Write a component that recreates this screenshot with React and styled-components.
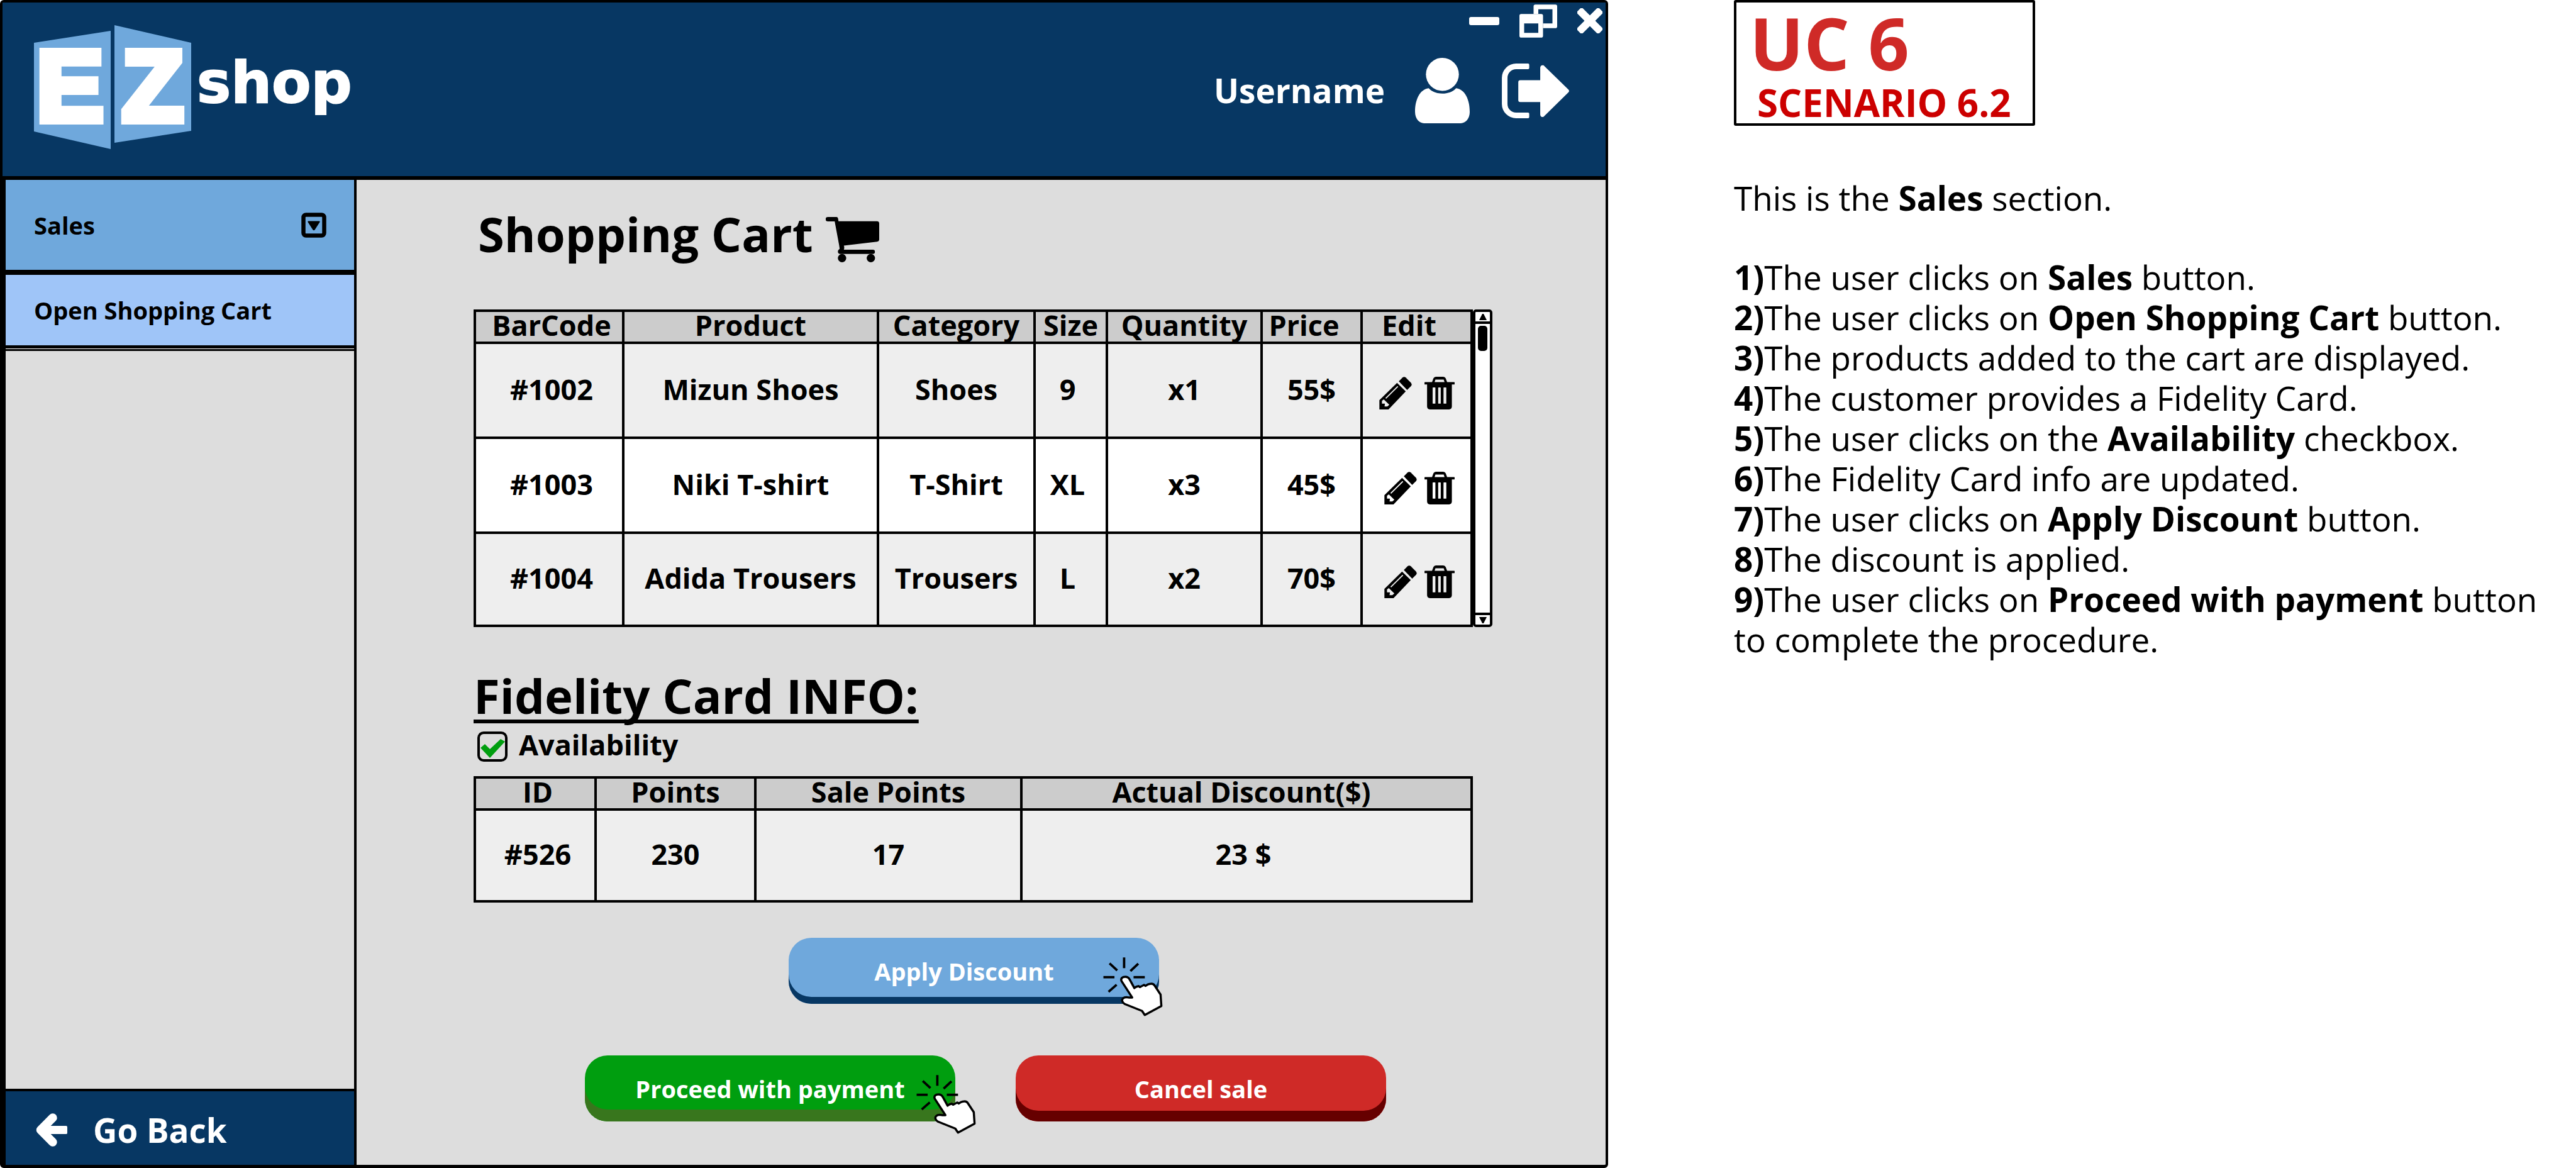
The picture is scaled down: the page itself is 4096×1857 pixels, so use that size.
import React from "react";
import styled, { createGlobalStyle } from "styled-components";

const color = {
  navy: "#073763",
  blue: "#6fa8dc",
  paleBlue: "#9fc5f8",
  green: "#009e0f",
  darkGreen: "#38761d",
  red: "#cf2a27",
  darkRed: "#660000",
  page: "#dddddd",
  head: "#cccccc",
  row: "#eeeeee",
};

const GlobalStyle = createGlobalStyle`
  *, *::before, *::after { box-sizing: border-box; }
  body {
    margin: 0;
    background: #fff;
    color: #000;
    font-family: "Open Sans", "Noto Sans", sans-serif;
  }
  h1, h2, p, ol { margin: 0; padding: 0; }
  button {
    margin: 0;
    padding: 0;
    border: 0;
    background: none;
    color: inherit;
    font: inherit;
    cursor: pointer;
  }
  svg { display: block; flex: none; }
`;

const Page = styled.div`
  display: grid;
  grid-template-columns: minmax(0, 1fr) 1539px;
  min-height: 100vh;
`;

/* ---------- application window ---------- */

const Window = styled.div`
  display: flex;
  flex-direction: column;
  border: 4px solid #000;
  border-bottom-width: 5px;
  border-radius: 6px;
  background: ${color.page};
`;

const Header = styled.header`
  display: flex;
  justify-content: space-between;
  height: 282px;
  padding-left: 50px;
  border-bottom: 6px solid #000;
  background: ${color.navy};
  color: #fff;
`;

const LogoLink = styled.a`
  padding-top: 35px;
`;

const HeaderSide = styled.div`
  display: flex;
  flex-direction: column;
  align-items: flex-end;
  gap: 30px;
`;

const WindowControls = styled.div`
  display: flex;
  align-items: center;
  gap: 32px;
  height: 58px;
  padding-right: 5px;
`;

const UserBar = styled.div`
  display: flex;
  align-items: center;
  height: 104px;
  padding-right: 58px;
  font-size: 53px;
  font-weight: 700;
  line-height: 64px;
`;

const UserName = styled.span`
  margin-right: 48px;
`;

const LogoutButton = styled.button`
  margin-left: 51px;
`;

const Body = styled.div`
  display: grid;
  grid-template-columns: 563px minmax(0, 1fr);
  flex: 1;
`;

const Sidebar = styled.nav`
  display: flex;
  flex-direction: column;
  border-left: 5px solid #000;
  border-right: 4px solid #000;
`;

const MenuItem = styled.button`
  display: flex;
  align-items: center;
  justify-content: space-between;
  height: ${(p) => p.$height}px;
  padding: 0 44px 0 45px;
  background: ${(p) => p.$fill};
  border-bottom: ${(p) => p.$line}px solid #000;
  font-size: 38px;
  font-weight: 700;
  line-height: 52px;
  text-align: left;
`;

const MenuRest = styled.div`
  flex: 1;
  margin-top: 3px;
  border-top: 3px solid #000;
  box-shadow: 0 -1px 0 #fff, 0 -3px 0 #000;
`;

const BackButton = styled.button`
  display: flex;
  align-items: center;
  gap: 41px;
  height: 121px;
  padding: 6px 0 0 48px;
  border-top: 4px solid #000;
  background: ${color.navy};
  color: #fff;
  font-size: 53px;
  font-weight: 700;
  line-height: 64px;
`;

const Main = styled.main`
  display: flex;
  flex-direction: column;
  padding: 41px 180px 0 186px;
`;

const Title = styled.h1`
  display: flex;
  align-items: flex-end;
  gap: 20px;
  padding-left: 7px;
  font-size: 76px;
  font-weight: 700;
  line-height: 90px;
`;

const CartArea = styled.section`
  display: flex;
  margin: 75px 0 64px;
`;

const CardArea = styled.section`
  padding-right: 31px;
`;

const Table = styled.table`
  flex: 1;
  width: 100%;
  table-layout: fixed;
  border-collapse: collapse;
  font-size: 45px;
  font-weight: 700;
  text-align: center;
`;

const Col = styled.col`
  width: ${(p) => p.$width}px;
`;

const HeadCell = styled.th`
  height: 51px;
  padding: 0 0 5px;
  border: 4px solid #000;
  background: ${color.head};
  line-height: 40px;
  white-space: nowrap;

  &:first-child {
    padding-left: 8px;
  }
  &:last-child {
    padding-right: 16px;
  }
`;

const CartHeadCell = styled(HeadCell)`
  &:nth-last-child(-n + 2) {
    padding-right: 24px;
  }
`;

const Cell = styled.td`
  height: ${(p) => p.$height}px;
  padding: 0 0 4px;
  border: 4px solid #000;
  background: ${(p) => (p.$plain ? "#fff" : color.row)};
  line-height: 60px;
  white-space: nowrap;

  &:first-child {
    padding-left: 8px;
  }
  &:nth-child(4) {
    padding-right: 10px;
  }
`;

const RowTools = styled.div`
  display: flex;
  justify-content: flex-end;
  gap: 12px;
  padding: 12px 25px 0 0;

  tr:first-child & {
    gap: 20px;
  }
`;

const ScrollBar = styled.div`
  display: flex;
  flex-direction: column;
  align-items: center;
  width: 31px;
  border: 4px solid #000;
  border-radius: 5px;
  background: #fff;
`;

const ScrollStep = styled.button`
  display: flex;
  align-items: center;
  justify-content: center;
  align-self: stretch;
  height: 19px;
  border: 0 solid #000;
  border-width: ${(p) => (p.$down ? "4px 0 0" : "0 0 4px")};
`;

const ScrollThumb = styled.div`
  width: 15px;
  height: 40px;
  margin: 3px 0 auto;
  border-radius: 5px;
  background: #000;
`;

const Subtitle = styled.h2`
  font-size: 76px;
  font-weight: 700;
  line-height: 90px;
  text-decoration: underline;
  text-decoration-thickness: 6px;
  text-underline-offset: 9px;
  text-decoration-skip-ink: none;
`;

const CheckRow = styled.label`
  display: flex;
  align-items: center;
  gap: 18px;
  height: 60px;
  margin: 6px 0 17px;
  padding-left: 6px;
  font-size: 45px;
  font-weight: 700;
  line-height: 60px;
`;

const CheckText = styled.span`
  padding-bottom: 7px;
`;

const CheckBox = styled.input`
  appearance: none;
  width: 48px;
  height: 48px;
  margin: 0;
  border: 4px solid #000;
  border-radius: 10px;

  &:checked::before {
    content: "";
    display: block;
    width: 40px;
    height: 40px;
    background: ${color.green};
    clip-path: polygon(1px 22px, 8px 16px, 16px 24px, 33px 8px, 40px 12px, 16px 38px);
  }
`;

const Actions = styled.div`
  display: flex;
  flex-direction: column;
  align-items: center;
  gap: 82px;
  margin-top: 56px;
`;

const ActionRow = styled.div`
  display: flex;
  gap: 96px;
`;

const FirstRow = styled(ActionRow)`
  padding-right: 30px;
`;

const SecondRow = styled(ActionRow)`
  padding-left: 8px;
`;

const ActionButton = styled.button`
  position: relative;
  width: 589px;
  height: 105px;
  padding-right: ${(p) => p.$inset || 0}px;
  border-radius: 36px;
  background: ${(p) => p.$face};
  box-shadow: inset 0 -${(p) => p.$depth}px 0 ${(p) => p.$edge};
  color: #fff;
  font-size: 38px;
  font-weight: 700;
  line-height: 52px;
`;

const Pointer = styled.svg`
  position: absolute;
  top: 31px;
  right: ${(p) => p.$right}px;
  width: 95px;
  height: 94px;
`;

/* ---------- scenario notes ---------- */

const Notes = styled.aside`
  padding: 0 50px 0 200px;
  font-size: 53px;
  line-height: 64px;
`;

const Badge = styled.div`
  width: 479px;
  height: 200px;
  padding: 7px 0 0 21px;
  border: 4px solid #000;
  border-radius: 3px;
  font-weight: 700;
  white-space: nowrap;
`;

const BadgeTitle = styled.p`
  color: ${color.red};
  font-size: 114px;
  line-height: 114px;
`;

const BadgeText = styled.p`
  padding: 8px 0 0 12px;
  color: #cc0000;
  font-size: 60px;
  line-height: 60px;
`;

const Intro = styled.p`
  margin: 83px 0 62px;
`;

const Steps = styled.ol`
  list-style: none;
`;

/* ---------- drawings ---------- */

const Logo = () => (
  <svg width="510" height="200" viewBox="54 39 510 200" role="img" aria-label="EZ shop">
    <path d="M54 68 176 49V237L54 209Z" fill={color.blue} />
    <path d="M182 40 304 68V208L182 227Z" fill={color.blue} />
    <g fill="#fff" stroke="#fff" fontWeight="700">
      <g fontFamily="'Liberation Sans', Arial, sans-serif" fontSize="160" strokeWidth="12">
        <text x="58" y="192">E</text>
        <text x="194" y="192">Z</text>
      </g>
      <text x="313" y="163" fontFamily="'DejaVu Sans', sans-serif" fontSize="91" strokeWidth="2">shop</text>
    </g>
  </svg>
);

const MinimizeIcon = () => (
  <svg width="48" height="13" viewBox="0 0 48 13"><rect width="48" height="13" rx="3" fill="#fff" /></svg>
);

const RestoreIcon = () => (
  <svg width="60" height="53" viewBox="0 0 64 56" fill="#fff" fillRule="evenodd">
    <path d="M27 0H61Q64 0 64 3V37Q64 40 61 40H40V32H56V8H32V16H24V3Q24 0 27 0Z" />
    <path d="M3 16H37Q40 16 40 19V53Q40 56 37 56H3Q0 56 0 53V19Q0 16 3 16ZM8 32V48H32V32Z" />
  </svg>
);

const CloseIcon = () => (
  <svg width="40" height="40" viewBox="0 0 43 43" fill="#fff">
    <rect x="-5" y="15" width="53" height="13" rx="2" transform="rotate(45 21.5 21.5)" />
    <rect x="-5" y="15" width="53" height="13" rx="2" transform="rotate(-45 21.5 21.5)" />
  </svg>
);

const UserIcon = () => (
  <svg width="87" height="104" viewBox="0 0 92 110" fill="#fff">
    <circle cx="46" cy="27.7" r="27.7" />
    <path d="M23 51C8 53 0 70 0 91C0 102 7 110 15 110H77C85 110 92 102 92 91C92 70 84 53 69 51C64 57 55 60 46 60C37 60 28 57 23 51Z" />
  </svg>
);

const LogoutIcon = () => (
  <svg width="107" height="87" viewBox="0 0 113 92">
    <path d="M44 4.7H24A19.3 19.3 0 0 0 4.7 24V68A19.3 19.3 0 0 0 24 87.3H44" fill="none" stroke="#fff" strokeWidth="9.4" />
    <rect x="38" y="0" width="8" height="9.4" rx="2" fill="#fff" />
    <rect x="38" y="82.6" width="8" height="9.4" rx="2" fill="#fff" />
    <path d="M31 28H64.500V7Q65 2 70 3L112 44Q114 46.300 112 48.500L70 89.500Q65 91 64.500 86V64.700H31Q27.600 64.700 27.600 61.500V31.500Q27.600 28 31 28Z" fill="#fff" />
  </svg>
);

const DropdownIcon = () => (
  <svg width="40" height="40" viewBox="0 0 40 40">
    <rect x="3.500" y="3.500" width="33" height="33" rx="4" fill="none" stroke="#000" strokeWidth="6.500" />
    <path d="M11 13.500H29Q30 14 29.500 15L21.500 27.500Q20 29 18.500 27.500L10.500 15Q10 14 11 13.500Z" />
  </svg>
);

const BackIcon = () => (
  <svg width="50" height="53" viewBox="0 0 53 56" fill="none" stroke="#fff" strokeLinejoin="round">
    <path d="M28.500 7.500 8 28 28.500 48.500" strokeWidth="14.500" strokeLinecap="round" />
    <path d="M10 28H47" strokeWidth="14" />
    <rect x="44" y="23" width="7" height="10" strokeWidth="4" fill="#fff" />
  </svg>
);

const CartIcon = () => (
  <svg width="85" height="72" viewBox="57 72 269 228">
    <path d="M67 72H112Q118 73 119 80L121 93H315Q326 94 326 104V186Q325 195 316 196L148 216Q152 226 148 237H294A10.500 10.500 0 0 1 294 258H130Q118 257 118 246Q119 238 127 232L124 212L102 94H67A11 11 0 0 1 67 72Z" />
    <circle cx="139" cy="279" r="21" />
    <circle cx="284" cy="279" r="21" />
  </svg>
);

const PencilIcon = () => (
  <svg width="52" height="52" viewBox="96 63 163 165">
    <path
      fillRule="evenodd"
      d="M185 94 229 137 142 228H96V181ZM187 110 126 170 130 174 191 114ZM109 184 118 177 146 204 136 213H122L124 199H109Z"
    />
    <path d="M194 86 213 67Q221 60 229 67L255 93Q262 101 256 110L236 130Z" />
  </svg>
);

const TrashIcon = () => (
  <svg width="48" height="52" viewBox="318 63 152 165">
    <path d="M320 90H356L363 71Q367 63 375 63H413Q421 63 425 71L432 90H468Q470 90 470 92V100Q470 102 468 102H456V214Q455 227 442 228H345Q332 227 331 214V102H320Q318 102 318 100V92Q318 90 320 90ZM369 90H419L415 77H373ZM359 119V197Q359 199 361 199H371Q373 199 373 197V119Q373 117 371 117H361Q359 117 359 119ZM387 119V197Q387 199 389 199H398Q400 199 400 197V119Q400 117 398 117H389Q387 117 387 119ZM414 119V197Q414 199 416 199H426Q428 199 428 197V119Q428 117 426 117H416Q414 117 414 119Z" fillRule="evenodd" />
  </svg>
);

const StepIcon = ({ down }) => (
  <svg width="12" height="10" viewBox="0 0 12 10">
    <path d={down ? "M0 0H12L7 10H5Z" : "M0 10H12L7 0H5Z"} />
  </svg>
);

const ClickPointer = ({ right }) => (
  <Pointer $right={right} viewBox="101 119 302 300" aria-hidden="true">
    <path
      d="M207 120V174M133 150 172 186M279 151 239 189M102 220H158M255 220H312M169 258 128 294"
      fill="none"
      stroke="#000"
      strokeWidth="12"
    />
    <path
      d="M194 240C188 226 199 218 213 218C226 218 231 224 235 231L259 275Q267 267 281 265L287 270Q298 265 308 259L316 264Q328 255 338 254Q353 250 361 261L392 308L396 366L312 412L298 391L210 356C196 348 194 334 201 328C208 321 220 321 230 323H248Z"
      fill="#fff"
      stroke="#000"
      strokeWidth="11"
      strokeLinejoin="round"
    />
  </Pointer>
);

/* ---------- data ---------- */

const cartColumns = [
  ["BarCode", 236],
  ["Product", 405],
  ["Category", 249],
  ["Size", 115],
  ["Quantity", 246],
  ["Price", 159],
  ["Edit", 175],
];

const cartRows = [
  { height: 151, values: ["#1002", "Mizun Shoes", "Shoes", "9", "x1", "55$"] },
  { height: 151, values: ["#1003", "Niki T-shirt", "T-Shirt", "XL", "x3", "45$"] },
  { height: 148, values: ["#1004", "Adida Trousers", "Trousers", "L", "x2", "70$"] },
];

const cardColumns = [
  ["ID", 192],
  ["Points", 254],
  ["Sale Points", 423],
  ["Actual Discount($)", 716],
];

const cardRow = ["#526", "230", "17", "23 $"];

const steps = [
  <>The user clicks on <b>Sales</b> button.</>,
  <>The user clicks on <b>Open Shopping Cart</b> button.</>,
  <>The products added to the cart are displayed.</>,
  <>The customer provides a Fidelity Card.</>,
  <>The user clicks on the <b>Availability</b> checkbox.</>,
  <>The Fidelity Card info are updated.</>,
  <>The user clicks on <b>Apply Discount</b> button.</>,
  <>The discount is applied.</>,
  <>The user clicks on <b>Proceed with payment</b> button to complete the procedure.</>,
];

const Columns = ({ columns }) => (
  <colgroup>
    {columns.map(([name, width]) => <Col key={name} $width={width} />)}
  </colgroup>
);

export default function App() {
  return (
    <Page>
      <GlobalStyle />
      <Window>
        <Header>
          <LogoLink href="#home"><Logo /></LogoLink>
          <HeaderSide>
            <WindowControls>
              <button aria-label="Minimize"><MinimizeIcon /></button>
              <button aria-label="Restore"><RestoreIcon /></button>
              <button aria-label="Close"><CloseIcon /></button>
            </WindowControls>
            <UserBar>
              <UserName>Username</UserName>
              <UserIcon />
              <LogoutButton aria-label="Log out"><LogoutIcon /></LogoutButton>
            </UserBar>
          </HeaderSide>
        </Header>

        <Body>
          <Sidebar>
            <MenuItem $fill={color.blue} $height={151} $line={8}>
              Sales
              <DropdownIcon />
            </MenuItem>
            <MenuItem $fill={color.paleBlue} $height={115} $line={3}>Open Shopping Cart</MenuItem>
            <MenuRest />
            <BackButton><BackIcon />Go Back</BackButton>
          </Sidebar>

          <Main>
            <Title>Shopping Cart<CartIcon /></Title>

            <CartArea>
              <Table>
                <Columns columns={cartColumns} />
                <thead>
                  <tr>{cartColumns.map(([name]) => <CartHeadCell key={name} scope="col">{name}</CartHeadCell>)}</tr>
                </thead>
                <tbody>
                  {cartRows.map(({ height, values }, i) => (
                    <tr key={values[0]}>
                      {values.map((value) => <Cell key={value} $height={height} $plain={i % 2 === 1}>{value}</Cell>)}
                      <Cell $height={height} $plain={i % 2 === 1}>
                        <RowTools>
                          <button aria-label="Edit product"><PencilIcon /></button>
                          <button aria-label="Remove product"><TrashIcon /></button>
                        </RowTools>
                      </Cell>
                    </tr>
                  ))}
                </tbody>
              </Table>
              <ScrollBar>
                <ScrollStep aria-label="Scroll up"><StepIcon /></ScrollStep>
                <ScrollThumb />
                <ScrollStep $down aria-label="Scroll down"><StepIcon down /></ScrollStep>
              </ScrollBar>
            </CartArea>

            <Subtitle>Fidelity Card INFO:</Subtitle>
            <CheckRow>
              <CheckBox type="checkbox" defaultChecked />
              <CheckText>Availability</CheckText>
            </CheckRow>
            <CardArea>
              <Table>
                <Columns columns={cardColumns} />
                <thead>
                  <tr>{cardColumns.map(([name]) => <HeadCell key={name} scope="col">{name}</HeadCell>)}</tr>
                </thead>
                <tbody>
                  <tr>{cardRow.map((value) => <Cell key={value} $height={146}>{value}</Cell>)}</tr>
                </tbody>
              </Table>
            </CardArea>

            <Actions>
              <FirstRow>
                <ActionButton $face={color.blue} $edge={color.navy} $depth={11} $inset={30}>
                  Apply Discount
                  <ClickPointer right={-6} />
                </ActionButton>
              </FirstRow>
              <SecondRow>
                <ActionButton $face={color.green} $edge={color.darkGreen} $depth={19}>
                  Proceed with payment
                  <ClickPointer right={-33} />
                </ActionButton>
                <ActionButton $face={color.red} $edge={color.darkRed} $depth={17}>Cancel sale</ActionButton>
              </SecondRow>
            </Actions>
          </Main>
        </Body>
      </Window>

      <Notes>
        <Badge>
          <BadgeTitle>UC 6</BadgeTitle>
          <BadgeText>SCENARIO 6.2</BadgeText>
        </Badge>
        <Intro>This is the <b>Sales</b> section.</Intro>
        <Steps>
          {steps.map((step, i) => <li key={i}><b>{i + 1})</b>{step}</li>)}
        </Steps>
      </Notes>
    </Page>
  );
}
